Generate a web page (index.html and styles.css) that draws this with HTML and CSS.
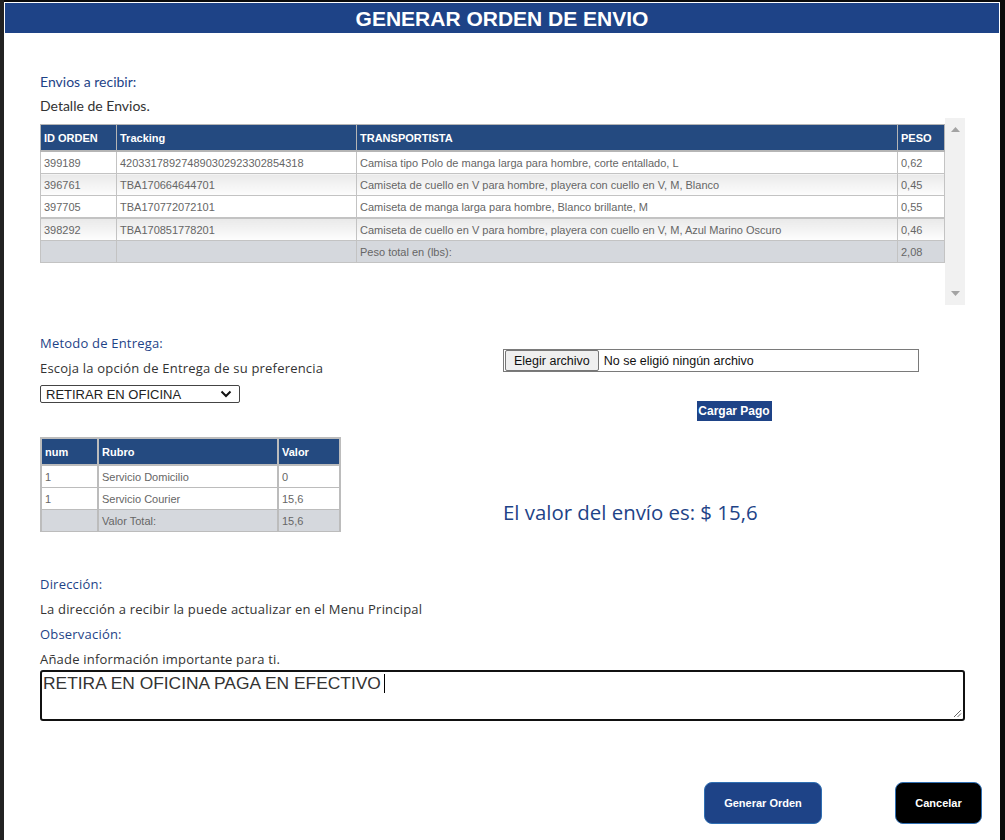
FILE: index.html
```html
<!DOCTYPE html>
<html lang="es">
<head>
<meta charset="utf-8">
<title>Generar Orden de Envio</title>
<link rel="stylesheet" href="styles.css">
</head>
<body>
<div class="modal">
  <div class="header">GENERAR ORDEN DE ENVIO</div>
  <div class="content">
    <div class="label-c first">Envios a recibir:</div>
    <div class="text-c">Detalle de Envios.</div>

    <div class="scrollbox">
      <div class="scroll-inner">
        <table class="grid orders">
          <colgroup>
            <col class="c-id"><col class="c-track"><col class="c-trans"><col class="c-peso">
          </colgroup>
          <thead>
            <tr><th>ID ORDEN</th><th>Tracking</th><th>TRANSPORTISTA</th><th>PESO</th></tr>
          </thead>
          <tbody>
            <tr><td>399189</td><td>420331789274890302923302854318</td><td>Camisa tipo Polo de manga larga para hombre, corte entallado, L</td><td>0,62</td></tr>
            <tr class="alt"><td>396761</td><td>TBA170664644701</td><td>Camiseta de cuello en V para hombre, playera con cuello en V, M, Blanco</td><td>0,45</td></tr>
            <tr><td>397705</td><td>TBA170772072101</td><td>Camiseta de manga larga para hombre, Blanco brillante, M</td><td>0,55</td></tr>
            <tr class="alt thick"><td>398292</td><td>TBA170851778201</td><td>Camiseta de cuello en V para hombre, playera con cuello en V, M, Azul Marino Oscuro</td><td>0,46</td></tr>
            <tr class="total"><td></td><td></td><td>Peso total en (lbs):</td><td>2,08</td></tr>
          </tbody>
        </table>
      </div>
      <div class="scrollbar">
        <svg class="arrow" width="9" height="5" viewBox="0 0 9 5"><path d="M0 5 L4.5 0 L9 5 Z" fill="#a3a3a3"/></svg>
        <svg class="arrow" width="9" height="5" viewBox="0 0 9 5"><path d="M0 0 L4.5 5 L9 0 Z" fill="#a3a3a3"/></svg>
      </div>
    </div>

    <div class="two-col">
      <div class="col-left">
        <div class="label-m">Metodo de Entrega:</div>
        <div class="text-m">Escoja la opción de Entrega de su preferencia</div>
        <div class="select">
          <span>RETIRAR EN OFICINA</span>
          <svg width="12" height="8" viewBox="0 0 12 8"><path d="M1.5 1.5 L6 6 L10.5 1.5" fill="none" stroke="#111" stroke-width="2"/></svg>
        </div>
        <table class="grid costs">
          <colgroup><col class="c-num"><col class="c-rubro"><col class="c-valor"></colgroup>
          <thead><tr><th>num</th><th>Rubro</th><th>Valor</th></tr></thead>
          <tbody>
            <tr><td>1</td><td>Servicio Domicilio</td><td>0</td></tr>
            <tr><td>1</td><td>Servicio Courier</td><td>15,6</td></tr>
            <tr class="total"><td></td><td>Valor Total:</td><td>15,6</td></tr>
          </tbody>
        </table>
      </div>
      <div class="col-right">
        <div class="file">
          <span class="file-btn">Elegir archivo</span>
          <span class="file-name">No se eligió ningún archivo</span>
        </div>
        <div class="upload-row"><button class="upload">Cargar Pago</button></div>
        <div class="amount">El valor del envío es: $ 15,6</div>
      </div>
    </div>

    <div class="label-m dir">Dirección:</div>
    <div class="text-m">La dirección a recibir la puede actualizar en el Menu Principal</div>
    <div class="label-m obs">Observación:</div>
    <div class="text-m">Añade información importante para ti.</div>
    <div class="textarea">RETIRA EN OFICINA PAGA EN EFECTIVO<span class="caret"></span>
      <svg class="grip" width="9" height="9" viewBox="0 0 9 9"><path d="M8 1 L1 8 M8 4.5 L4.5 8" stroke="#666" stroke-width="1"/></svg>
    </div>

    <div class="actions">
      <button class="btn primary">Generar Orden</button>
      <button class="btn dark">Cancelar</button>
    </div>
  </div>
</div>
</body>
</html>
```

FILE: styles.css
```css
html, body {
  margin: 0;
  padding: 0;
  background: #0b0b0b;
  height: 840px;
  overflow: hidden;
}
body {
  background: linear-gradient(90deg, #222 0, #222 4px, #0b0b0b 4px);
}
.modal {
  margin: 2px 0 0 4px;
  width: 996px;
  height: 838px;
  background: #fff;
  padding-top: 1px;
  box-sizing: border-box;
}
.header {
  margin: 0 1px;
  height: 30px;
  line-height: 31px;
  background: #1e4387;
  color: #fff;
  font-family: "Liberation Sans", Arial, sans-serif;
  font-weight: bold;
  font-size: 21px;
  text-align: center;
}
.content {
  padding: 0 35px 0 36px;
}
.label-c, .text-c {
  font-family: Lato, "Open Sans", sans-serif;
  font-size: 14px;
  line-height: 18px;
}
.label-c { color: #1e4387; }
.label-c.first { margin-top: 40px; }
.text-c { color: #333; margin-top: 6px; }

.scrollbox {
  margin-top: 3px;
  height: 187px;
  display: flex;
}
.scroll-inner {
  flex: 1;
  padding-top: 6px;
}
.scrollbar {
  width: 21px;
  background: #f1f1f1;
  display: flex;
  flex-direction: column;
  justify-content: space-between;
  align-items: center;
  padding: 9px 0 9px;
  box-sizing: border-box;
}
.arrow { display: block; }

.grid {
  border-collapse: collapse;
  table-layout: fixed;
  font-family: "Liberation Sans", Arial, sans-serif;
  font-size: 11px;
  color: #666;
}
.grid th {
  background: #244a80;
  color: #fff;
  font-weight: bold;
  text-align: left;
  height: 25px;
  padding: 0 3px;
  border: 1px solid #b5b5b5;
  border-bottom: 2px solid #b5b5b5;
}
.grid td {
  height: 21px;
  padding: 0 3px;
  border: 1px solid #c3c3c3;
  background: #fff;
  white-space: nowrap;
}
.grid tr.alt td {
  background: linear-gradient(#e9e9e9, #fdfdfd);
}
.grid tr.thick td { border-top: 2px solid #c3c3c3; }
.grid tr.total td { background: #d5d8dd; }

.orders { width: 904px; }
.c-id { width: 76px; }
.c-track { width: 240px; }
.c-trans { width: 541px; }
.c-peso { width: 47px; }

.two-col {
  display: flex;
  margin-top: 29px;
}
.col-left { width: 463px; }
.col-right { flex: 1; }

.label-m, .text-m {
  font-family: "Open Sans", sans-serif;
  font-size: 13px;
  line-height: 18px;
  letter-spacing: 0.2px;
}
.label-m { color: #1e4387; }
.text-m { color: #333; margin-top: 7px; }

.select {
  margin-top: 8px;
  width: 200px;
  height: 18px;
  box-sizing: border-box;
  border: 1px solid #444;
  border-radius: 2px;
  display: flex;
  align-items: center;
  justify-content: space-between;
  padding: 0 7px 0 5px;
  font-family: "Liberation Sans", Arial, sans-serif;
  font-size: 13px;
  color: #222;
}
.select svg { display: block; }

.costs { width: 299px; margin-top: 34px; }
.c-num { width: 57px; }
.c-rubro { width: 180px; }
.c-valor { width: 62px; }
.costs td, .costs th { border-width: 2px; border-color: #bcbcbc; }
.costs td { height: 21px; border-top-width: 1px; border-bottom-width: 1px; }

.file {
  margin-top: 15px;
  width: 416px;
  height: 23px;
  box-sizing: border-box;
  border: 1px solid #7a7a7a;
  display: flex;
  align-items: center;
  padding-left: 1px;
  font-family: "Liberation Sans", Arial, sans-serif;
  font-size: 12.5px;
  color: #111;
}
.file-btn {
  height: 21px;
  line-height: 20px;
  box-sizing: border-box;
  padding: 0 8px;
  border: 1px solid #767676;
  border-radius: 2px;
  background: #efefef;
}
.file-name { margin-left: 5px; }

.upload-row {
  display: flex;
  justify-content: center;
  margin-top: 29px;
}
.upload {
  border: none;
  background: #1e4387;
  color: #fff;
  font-family: "Liberation Sans", Arial, sans-serif;
  font-weight: bold;
  font-size: 12px;
  height: 20px;
  width: 75px;
  padding: 0;
}
.amount {
  margin-top: 79px;
  font-family: "Open Sans", sans-serif;
  font-size: 20.4px;
  line-height: 24px;
  color: #1e4387;
  letter-spacing: 0px;
}

.label-m.dir { margin-top: 43px; }
.label-m.obs { margin-top: 7px; }

.textarea {
  position: relative;
  margin-top: 2px;
  height: 51px;
  box-sizing: border-box;
  border: 2px solid #111;
  border-radius: 3px;
  padding: 0 1px;
  font-family: "Liberation Sans", Arial, sans-serif;
  font-size: 17.4px;
  line-height: 22px;
  color: #333;
}
.caret {
  display: inline-block;
  width: 1px;
  height: 19px;
  background: #000;
  margin-left: 3px;
  vertical-align: -4px;
}
.grip {
  position: absolute;
  right: 1px;
  bottom: 1px;
}

.actions {
  display: flex;
  justify-content: flex-end;
  gap: 73px;
  margin-top: 61px;
  margin-right: -17px;
}
.btn {
  height: 42px;
  border-radius: 8px;
  border: 1px solid #2f6fb3;
  color: #fff;
  font-family: "Liberation Sans", Arial, sans-serif;
  font-weight: bold;
  font-size: 11px;
  padding: 0;
}
.btn.primary { width: 118px; background: #1e4387; }
.btn.dark { width: 87px; background: #000; }
```
